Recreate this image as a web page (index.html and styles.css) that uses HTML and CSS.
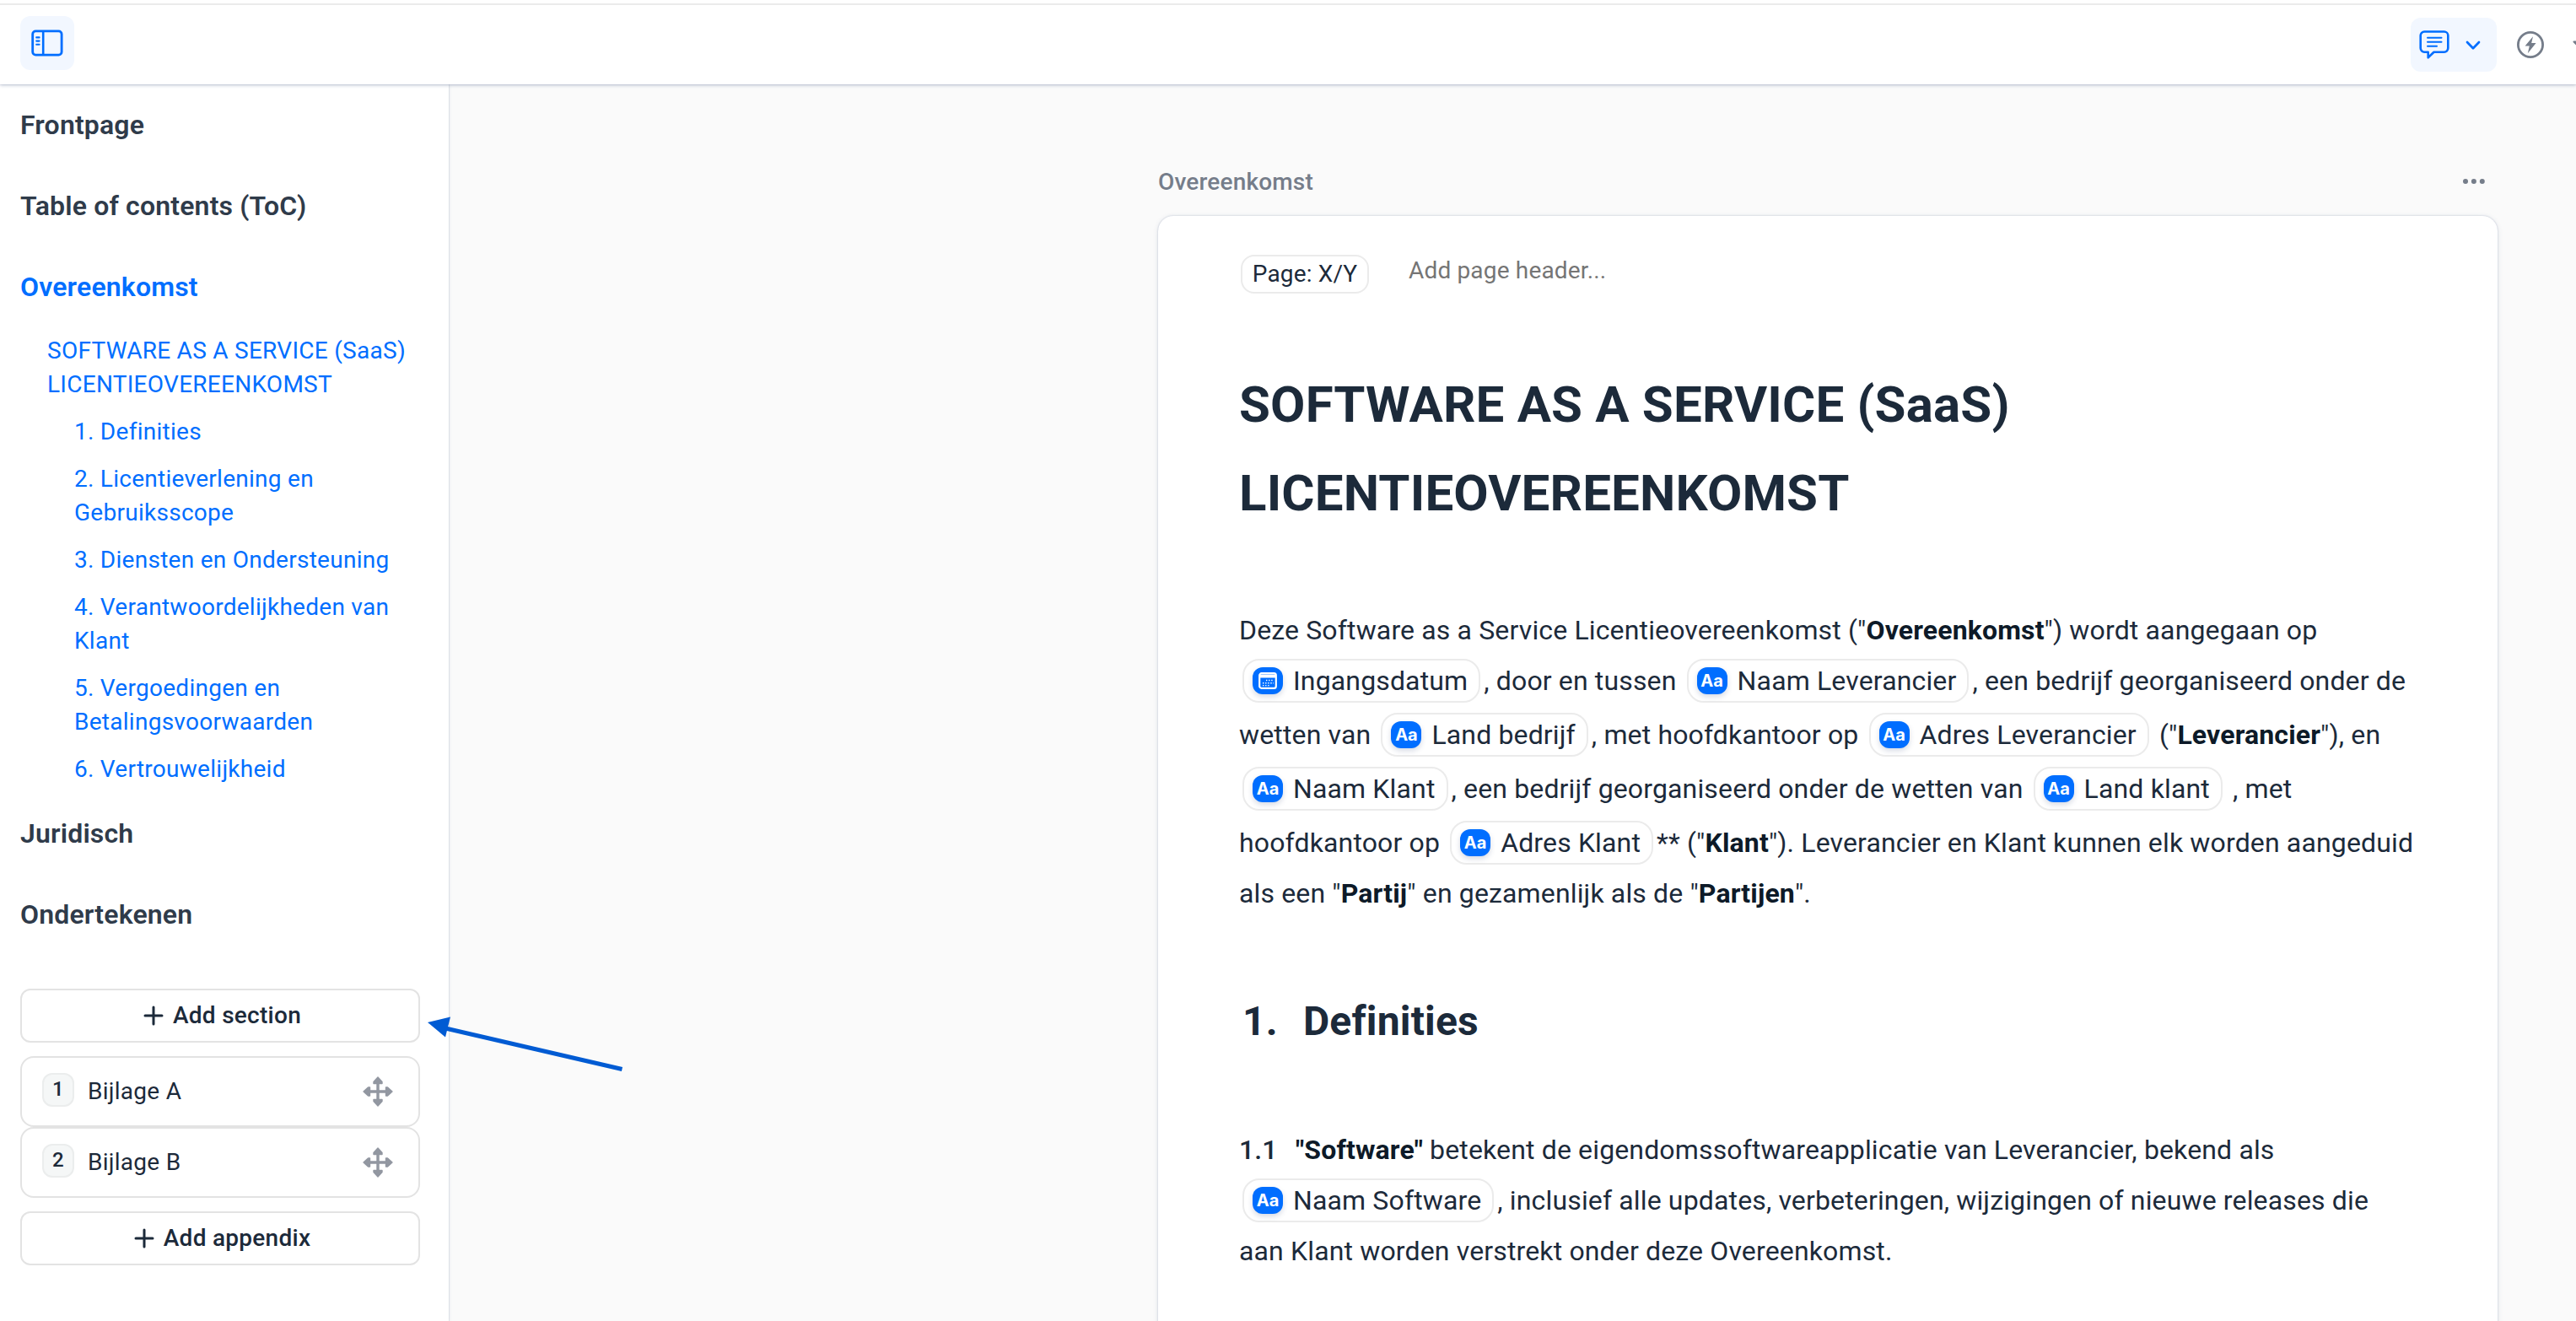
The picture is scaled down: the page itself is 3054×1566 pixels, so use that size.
FILE: index.html
```html
<!DOCTYPE html>
<html lang="nl">
<head>
    <meta charset="UTF-8">
    <title>Overeenkomst</title>
    <link rel="stylesheet" href="styles.css">
</head>
<body>
<svg class="sprite">
    <symbol id="icon-plus" viewBox="0 0 24 24">
        <path d="M12 2v20M2 12h20" fill="none" stroke="currentColor" stroke-width="3" stroke-linecap="round"/>
    </symbol>
    <symbol id="icon-move" viewBox="0 0 36 36">
        <path d="M18 5v26M5 18h26" fill="none" stroke="currentColor" stroke-width="3.4"/>
        <path d="M18 1l5 5.5v2H13v-2zM18 35l5-5.5v-2H13v2zM1 18l5.5-5h2v10h-2zM35 18l-5.5-5h-2v10h2z" fill="currentColor" stroke="currentColor" stroke-width="1.4" stroke-linejoin="round"/>
    </symbol>
</svg>

<header class="topbar">
    <button class="toggle-button" aria-label="Sidebar">
        <svg width="38" height="32" viewBox="0 0 38 32" fill="none" stroke="currentColor">
            <rect x="1.7" y="1.9" width="34.4" height="28.2" rx="3.6" stroke-width="2.8"/>
            <path d="M14.2 2v28" stroke-width="2.6"/>
            <path d="M6.2 9.4h3.4M6.2 13.6h3.4M6.2 17.8h3.4" stroke-width="2.1" stroke-linecap="round"/>
        </svg>
    </button>
    <div class="topbar-actions">
        <button class="comment-button" aria-label="Comments">
            <svg width="36" height="36" viewBox="0 0 36 36" fill="none" stroke="currentColor" stroke-linejoin="round">
                <path d="M6.3 2.5h23.4a4.6 4.6 0 0 1 4.6 4.6v15a4.6 4.6 0 0 1-4.6 4.6H17.5l-6.8 6.6v-6.6H6.3a4.6 4.6 0 0 1-4.6-4.6v-15a4.6 4.6 0 0 1 4.6-4.6z" stroke-width="2.6"/>
                <path d="M10 9.7h16.5M10 14.7h16.5M10 19.7h11" stroke-width="2" stroke-linecap="round"/>
            </svg>
            <svg class="chevron" width="18" height="12" viewBox="0 0 18 12" fill="none" stroke="currentColor">
                <path d="M2 2l7 7.2L16 2" stroke-width="2.7" stroke-linecap="round" stroke-linejoin="round"/>
            </svg>
        </button>
        <svg class="bolt" width="32" height="32" viewBox="0 0 32 32">
            <circle cx="16" cy="16" r="14.6" fill="none" stroke="currentColor" stroke-width="2.8"/>
            <path d="M19 6.2L9.6 17.6h5.2l-2 8.6L22.6 14h-5.4z" fill="currentColor"/>
        </svg>
        <svg class="caret" width="16" height="10" viewBox="0 0 16 10">
            <path d="M1.5 1.5h13L8 8z" fill="currentColor" stroke="currentColor" stroke-width="2" stroke-linejoin="round"/>
        </svg>
    </div>
</header>

<div class="layout">
    <nav class="sidebar">
        <a class="section">Frontpage</a>
        <a class="section">Table of contents (ToC)</a>
        <a class="section active">Overeenkomst</a>
        <ul class="outline">
            <li>SOFTWARE AS A SERVICE (SaaS) LICENTIEOVEREENKOMST</li>
            <li class="sub">1. Definities</li>
            <li class="sub">2. Licentieverlening en Gebruiksscope</li>
            <li class="sub">3. Diensten en Ondersteuning</li>
            <li class="sub">4. Verantwoordelijkheden van Klant</li>
            <li class="sub">5. Vergoedingen en Betalingsvoorwaarden</li>
            <li class="sub">6. Vertrouwelijkheid</li>
        </ul>
        <a class="section">Juridisch</a>
        <a class="section">Ondertekenen</a>

        <div class="sidebar-actions">
            <button class="add-button"><svg><use href="#icon-plus"/></svg>Add section</button>
            <div class="appendices">
                <div class="appendix">
                    <span class="number">1</span>
                    <span class="name">Bijlage A</span>
                    <svg class="move"><use href="#icon-move"/></svg>
                </div>
                <div class="appendix">
                    <span class="number">2</span>
                    <span class="name">Bijlage B</span>
                    <svg class="move"><use href="#icon-move"/></svg>
                </div>
            </div>
            <button class="add-button"><svg><use href="#icon-plus"/></svg>Add appendix</button>
        </div>
    </nav>

    <main class="editor">
        <div class="page-title">
            <span>Overeenkomst</span>
            <svg width="28" height="8" viewBox="0 0 28 8" fill="currentColor">
                <circle cx="4" cy="4" r="3"/><circle cx="13.9" cy="4" r="3"/><circle cx="23.8" cy="4" r="3"/>
            </svg>
        </div>
        <article class="page">
            <div class="page-header">
                <span class="page-number">Page: X/Y</span>
                <span class="placeholder">Add page header...</span>
            </div>

            <h1>SOFTWARE AS A SERVICE (SaaS) LICENTIEOVEREENKOMST</h1>

            <p>Deze Software as a Service Licentieovereenkomst ("<strong>Overeenkomst</strong>") wordt aangegaan op <span class="field"><span class="field-icon"><svg width="22" height="20" viewBox="0 0 22 20"><rect x="1.2" y="1.2" width="19.6" height="17.6" rx="2.4" fill="none" stroke="#fff" stroke-width="2.2"/><path d="M1 2.5h20v4H1z" fill="#fff"/><path d="M9 9.5h9M5 12.7h13M5 15.6h9" stroke="#fff" stroke-width="1.4" stroke-dasharray="1.4 1.7"/></svg></span>Ingangsdatum</span>, door en tussen <span class="field"><span class="field-icon">Aa</span>Naam Leverancier</span>, een bedrijf georganiseerd onder de wetten van <span class="field"><span class="field-icon">Aa</span>Land bedrijf</span>, met hoofdkantoor op <span class="field"><span class="field-icon">Aa</span>Adres Leverancier</span> ("<strong>Leverancier</strong>"), en <span class="field"><span class="field-icon">Aa</span>Naam Klant</span>, een bedrijf georganiseerd onder de wetten van <span class="field"><span class="field-icon">Aa</span>Land klant</span> , met hoofdkantoor op <span class="field"><span class="field-icon">Aa</span>Adres Klant</span>** ("<strong>Klant</strong>"). Leverancier en Klant kunnen elk worden aangeduid als een "<strong>Partij</strong>" en gezamenlijk als de "<strong>Partijen</strong>".</p>

            <h2><span class="h2-number">1.</span>Definities</h2>

            <p><span class="clause-number">1.1</span><strong>"Software"</strong> betekent de eigendomssoftwareapplicatie van Leverancier, bekend als <span class="field"><span class="field-icon">Aa</span>Naam Software</span>, inclusief alle updates, verbeteringen, wijzigingen of nieuwe releases die aan Klant worden verstrekt onder deze Overeenkomst.</p>
        </article>
    </main>
</div>

<!-- pointer to the "Add section" button -->
<svg class="arrow" width="234" height="68" viewBox="0 0 234 68">
    <path d="M20 14.5L231.5 63.5" stroke="#005bd3" stroke-width="5"/>
    <path d="M1 8l27-6.5-6 24z" fill="#005bd3"/>
</svg>
</body>
</html>
```
FILE: styles.css
```css
* {
    box-sizing: border-box;
}

body {
    margin: 0;
    height: 100vh;
    overflow: hidden;
    position: relative;
    background-color: #fafafa;
    color: #1c2a3a;
    font-family: Roboto, sans-serif;
    letter-spacing: 0.17px;
}

button {
    border: none;
    padding: 0;
    font-family: inherit;
    letter-spacing: inherit;
    cursor: pointer;
}

.sprite {
    display: none;
}

/* top bar */
.topbar {
    position: relative;
    z-index: 2;
    display: flex;
    justify-content: space-between;
    align-items: flex-start;
    height: 100px;
    padding-left: 24px;
    background: linear-gradient(#fff 4px, #ebebeb 4px, #ebebeb 6px, #fff 6px);
    box-shadow: 0 0 1px rgba(50, 70, 110, 0.4), 0 1px 4px rgba(50, 70, 120, 0.32);
}

.toggle-button {
    display: flex;
    align-items: center;
    justify-content: center;
    width: 64px;
    height: 64px;
    margin-top: 19px;
    border-radius: 12px;
    background-color: #f2f7ff;
    color: #006eff;
}

.topbar-actions {
    display: flex;
    align-items: center;
    width: 196px;
    height: 64px;
    margin-top: 21px;
    overflow: hidden;
    color: #757d8a;
}

.topbar-actions svg {
    flex: none;
}

.comment-button {
    display: flex;
    flex: none;
    align-items: center;
    width: 102px;
    height: 64px;
    padding-left: 10px;
    border-radius: 12px;
    background-color: #f2f7ff;
    color: #006eff;
}

.chevron {
    margin: 2px 0 0 19px;
}

.bolt {
    margin: 0 34px 0 24px;
}

/* sidebar */
.layout {
    display: flex;
    height: calc(100vh - 100px);
    overflow: hidden;
}

.sidebar {
    position: relative;
    z-index: 1;
    flex: none;
    width: 532px;
    background-color: #fff;
    box-shadow: 0 0 1px rgba(50, 70, 110, 0.5), 0 1px 4px rgba(50, 70, 120, 0.15);
}

.section {
    display: block;
    padding-left: 24px;
    font-size: 32px;
    font-weight: 600;
    line-height: 96px;
    color: #2f3b4a;
}

.section.active {
    color: #006eff;
}

.outline {
    margin: 0;
    padding: 0 34px 0 56px;
    list-style: none;
    font-size: 28px;
    line-height: 40px;
    letter-spacing: 0.27px;
    color: #006eff;
}

.outline li {
    padding: 8px 0;
}

.outline .sub {
    padding-left: 32px;
}

.sidebar-actions {
    display: flex;
    flex-direction: column;
    gap: 16px;
    width: 474px;
    margin: 40px 0 0 24px;
    font-size: 28px;
    letter-spacing: 0.27px;
}

.add-button {
    display: flex;
    align-items: center;
    justify-content: center;
    gap: 11px;
    height: 64px;
    padding: 0 0 1px 5px;
    border: 2px solid #e3e3e3;
    border-radius: 12px;
    background-color: #fff;
    color: #1c2a3a;
    font-size: 28px;
    font-weight: 500;
}

.add-button svg {
    width: 24px;
    height: 24px;
}

.appendix {
    display: flex;
    align-items: center;
    height: 84px;
    padding: 0 30px 0 24px;
    border: 2px solid #e3e3e3;
    border-radius: 16px;
}

.number {
    width: 38px;
    height: 40px;
    margin: 0 15px 5px 0;
    border: 2px solid #ebeded;
    border-radius: 12px;
    background-color: #f5f7f7;
    font-size: 24px;
    font-weight: 500;
    line-height: 34px;
    text-align: center;
}

.name {
    flex: 1;
    padding: 0 0 1px 1px;
}

.move {
    width: 36px;
    height: 36px;
    color: #9297a1;
}

/* document */
.editor {
    width: 1588px;
    margin: 97px 0 0 841px;
}

.page-title {
    display: flex;
    justify-content: space-between;
    align-items: center;
    height: 36px;
    padding-right: 14px;
    font-size: 28px;
    font-weight: 500;
    color: #757d8a;
}

.page {
    height: 100%;
    margin-top: 23px;
    padding: 46px 96px 0;
    border-radius: 18px;
    background-color: #fff;
    box-shadow: 0 0 2px rgba(50, 70, 120, 0.3), 0 1px 6px rgba(50, 70, 120, 0.12);
}

.page-header {
    display: flex;
    align-items: center;
    height: 46px;
    margin-left: 2px;
    font-size: 28px;
}

.page-number {
    width: 152px;
    height: 46px;
    margin-right: 47px;
    border: 2px solid #ebebeb;
    border-radius: 16px;
    line-height: 42px;
    text-align: center;
}

.placeholder {
    margin-bottom: 9px;
    color: #757575;
}

h1 {
    margin: 79px 0 82px;
    font-size: 60px;
    font-weight: 700;
    line-height: 105px;
}

h2 {
    margin: 82px 0;
    font-size: 48px;
    font-weight: 700;
    line-height: 84px;
}

.h2-number {
    display: inline-block;
    width: 76px;
    padding-left: 4px;
}

p {
    margin: 0;
    font-size: 32px;
    line-height: 56px;
    letter-spacing: 0.145px;
}

strong {
    font-weight: 700;
    color: #0d1a28;
}

.clause-number {
    display: inline-block;
    width: 67px;
    font-weight: 500;
}

.field {
    display: inline-block;
    height: 52px;
    margin: 6px 4px;
    padding: 0 13px 0 10px;
    border: 2px solid #ebebeb;
    border-radius: 20px;
    line-height: 48px;
    white-space: nowrap;
}

.field-icon {
    float: left;
    display: flex;
    align-items: center;
    justify-content: center;
    width: 36px;
    height: 32px;
    margin: 8px 12px 0 0;
    border-radius: 12px;
    background-color: #006eff;
    box-shadow: 0 3px 6px rgba(50, 70, 120, 0.2);
    color: #fff;
    font-family: Inter, sans-serif;
    font-size: 20px;
    font-weight: 700;
    letter-spacing: 0;
    line-height: 32px;
}

.arrow {
    position: absolute;
    z-index: 3;
    top: 1204px;
    left: 506px;
}
```
